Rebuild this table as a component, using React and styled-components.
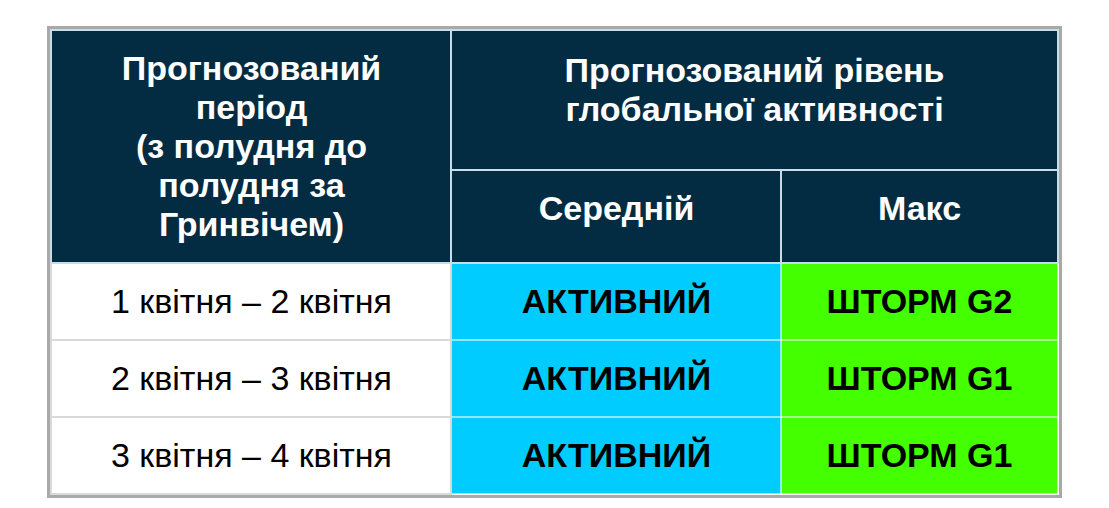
import React from "react";
import styled, { createGlobalStyle } from "styled-components";

const GlobalStyle = createGlobalStyle`
  html, body {
    margin: 0;
    padding: 0;
    background: #ffffff;
  }
  body {
    font-family: "Liberation Sans", Arial, sans-serif;
  }
`;

const Page = styled.div`
  width: 1109px;
  height: 508px;
  display: flex;
  justify-content: center;
  padding-top: 26px;
  box-sizing: border-box;
`;

const Frame = styled.div`
  border: 3px solid #a9a9a9;
  height: fit-content;
`;

const Table = styled.table`
  border-collapse: collapse;
  table-layout: fixed;
  width: 1006px;
`;

const HeadCell = styled.th`
  background: #032c42;
  color: #ffffff;
  font-weight: bold;
  font-size: 34px;
  line-height: 39px;
  text-align: center;
  vertical-align: middle;
  padding: 0 0 ${(p) => p.$pb || 0}px;
  height: ${(p) => p.$h}px;
  border: 2px solid #c9dde8;
`;

const BodyCell = styled.td`
  background: ${(p) => p.$bg || "#ffffff"};
  color: #000000;
  font-weight: ${(p) => (p.$bold ? "bold" : "normal")};
  font-size: 34px;
  text-align: center;
  vertical-align: middle;
  padding: 0;
  height: 75px;
  border: 2px solid ${(p) => (p.$bg ? "rgba(255,255,255,0.55)" : "#d9d9d9")};
`;

const rows = [
  { period: "1 квітня – 2 квітня", avg: "АКТИВНИЙ", max: "ШТОРМ G2" },
  { period: "2 квітня – 3 квітня", avg: "АКТИВНИЙ", max: "ШТОРМ G1" },
  { period: "3 квітня – 4 квітня", avg: "АКТИВНИЙ", max: "ШТОРМ G1" },
];

export default function App() {
  return (
    <>
      <GlobalStyle />
      <Page>
        <Frame>
          <Table>
            <colgroup>
              <col style={{ width: 400 }} />
              <col style={{ width: 330 }} />
              <col style={{ width: 276 }} />
            </colgroup>
            <thead>
              <tr>
                <HeadCell rowSpan={2} $h={140}>
                  Прогнозований
                  <br />
                  період
                  <br />
                  (з полудня до
                  <br />
                  полудня за
                  <br />
                  Гринвічем)
                </HeadCell>
                <HeadCell colSpan={2} $h={118} $pb={20}>
                  Прогнозований рівень
                  <br />
                  глобальної активності
                </HeadCell>
              </tr>
              <tr>
                <HeadCell $h={75} $pb={16}>
                  Середній
                </HeadCell>
                <HeadCell $h={75} $pb={16}>
                  Макс
                </HeadCell>
              </tr>
            </thead>
            <tbody>
              {rows.map((r) => (
                <tr key={r.period}>
                  <BodyCell>{r.period}</BodyCell>
                  <BodyCell $bg="#00ccff" $bold>
                    {r.avg}
                  </BodyCell>
                  <BodyCell $bg="#44ff00" $bold>
                    {r.max}
                  </BodyCell>
                </tr>
              ))}
            </tbody>
          </Table>
        </Frame>
      </Page>
    </>
  );
}
